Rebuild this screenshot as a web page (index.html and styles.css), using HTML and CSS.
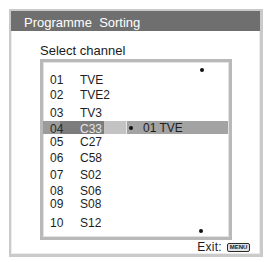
FILE: index.html
```html
<!DOCTYPE html>
<html>
<head>
<meta charset="utf-8">
<link rel="stylesheet" href="styles.css">
</head>
<body>
<div class="panel">
  <div class="header">Programme&nbsp; Sorting</div>
  <div class="content">
    <div class="label">Select channel</div>
    <div class="listbox">
      <span class="arrow up"></span>
      <div class="row"><span class="num">01</span><span class="name">TVE</span></div>
      <div class="row"><span class="num">02</span><span class="name">TVE2</span></div>
      <div class="row"><span class="num">03</span><span class="name">TV3</span></div>
      <div class="row sel"><span class="num">04</span><span class="name">C33</span><span class="target"><span class="dot"></span>01 TVE</span></div>
      <div class="row"><span class="num">05</span><span class="name">C27</span></div>
      <div class="row"><span class="num">06</span><span class="name">C58</span></div>
      <div class="row"><span class="num">07</span><span class="name">S02</span></div>
      <div class="row"><span class="num">08</span><span class="name">S06</span></div>
      <div class="row"><span class="num">09</span><span class="name">S08</span></div>
      <div class="row"><span class="num">10</span><span class="name">S12</span></div>
      <span class="arrow down"></span>
    </div>
    <div class="footer"><span class="exit">Exit:</span><span class="key">MENU</span></div>
  </div>
</div>
</body>
</html>
```

FILE: styles.css
```css
html, body {
  margin: 0;
  padding: 0;
  background: #ffffff;
}
body {
  font-family: "Liberation Sans", Arial, sans-serif;
  color: #1e1e1e;
}
.panel {
  margin: 9px 0 0 9px;
  width: 254px;
  height: 248px;
  box-sizing: border-box;
  border-style: solid;
  border-color: #cacaca;
  border-width: 2px 3px 3px 2px;
  box-shadow: inset 0 0 0 1px #ececec;
  background: #ffffff;
}
.header {
  height: 20px;
  box-sizing: border-box;
  padding: 4px 0 0 13px;
  line-height: 16px;
  font-size: 13px;
  color: #ffffff;
  background: #6f6f6f;
  white-space: nowrap;
}
.content {
  padding-left: 29px;
}
.label {
  margin-top: 12px;
  font-size: 13px;
  line-height: 15px;
  color: #1a1a1a;
}
.listbox {
  position: relative;
  margin-top: 1px;
  width: 192px;
  height: 181px;
  box-sizing: border-box;
  border: 3px solid #b9b9b9;
  box-shadow: inset 0 0 0 1px #e2e2e2;
  padding-top: 10px;
  font-size: 12px;
}
.row {
  display: flex;
  align-items: flex-start;
  box-sizing: border-box;
  padding-top: 2px;
  line-height: 12px;
  height: 16px;
  white-space: nowrap;
}
.row:nth-of-type(1) { height: 15px; }
.row:nth-of-type(2) { height: 18px; }
.row:nth-of-type(3) { height: 16px; }
.row:nth-of-type(4) { height: 13px; }
.row:nth-of-type(5) { height: 16px; }
.row:nth-of-type(6) { height: 17px; }
.row:nth-of-type(7) { height: 16px; }
.row:nth-of-type(8) { height: 13px; }
.row:nth-of-type(9) { height: 19px; }
.row:nth-of-type(10) { height: 16px; }
.num {
  width: 30px;
  padding-left: 7px;
  flex: none;
}
.name {
  width: 47px;
  flex: none;
}
.sel {
  background: linear-gradient(to right,
    #9b9b9b 0, #9b9b9b 17px,
    #7c7c7c 17px, #7c7c7c 61px,
    #c3c3c3 61px, #c3c3c3 83px,
    #e6e6e6 83px, #e6e6e6 84px);
  background-repeat: no-repeat;
  background-size: 84px 100%;
}
.sel .num { color: #2a2a2a; }
.sel .name { color: #e4e4e4; }
.target {
  flex: 1;
  display: flex;
  align-items: center;
  height: 13px;
  margin-top: -2px;
  box-sizing: border-box;
  padding-top: 1px;
  background: #a3a3a3;
  color: #1e1e1e;
  padding-left: 2px;
  margin-right: 1px;
  line-height: 12px;
}
.dot {
  display: inline-block;
  width: 4px;
  height: 4px;
  border-radius: 50%;
  background: #111;
  margin-right: 10px;
}
.arrow {
  position: absolute;
  width: 4px;
  height: 4px;
  border-radius: 50%;
  background: #111;
}
.arrow.up { left: 157px; top: 6px; }
.arrow.down { left: 156px; top: 167px; }
.footer {
  display: flex;
  justify-content: flex-end;
  align-items: center;
  margin-top: 1px;
  padding-right: 10px;
  height: 13px;
  font-size: 12px;
  line-height: 13px;
}
.exit {
  margin-right: 5px;
  letter-spacing: 0.3px;
}
.key {
  display: inline-block;
  width: 23px;
  height: 9px;
  box-sizing: border-box;
  border: 1px solid #2a2a2a;
  border-radius: 2px;
  background: #e2e2e2;
  font-size: 6px;
  line-height: 7px;
  font-weight: bold;
  text-align: center;
  color: #222;
}
```
